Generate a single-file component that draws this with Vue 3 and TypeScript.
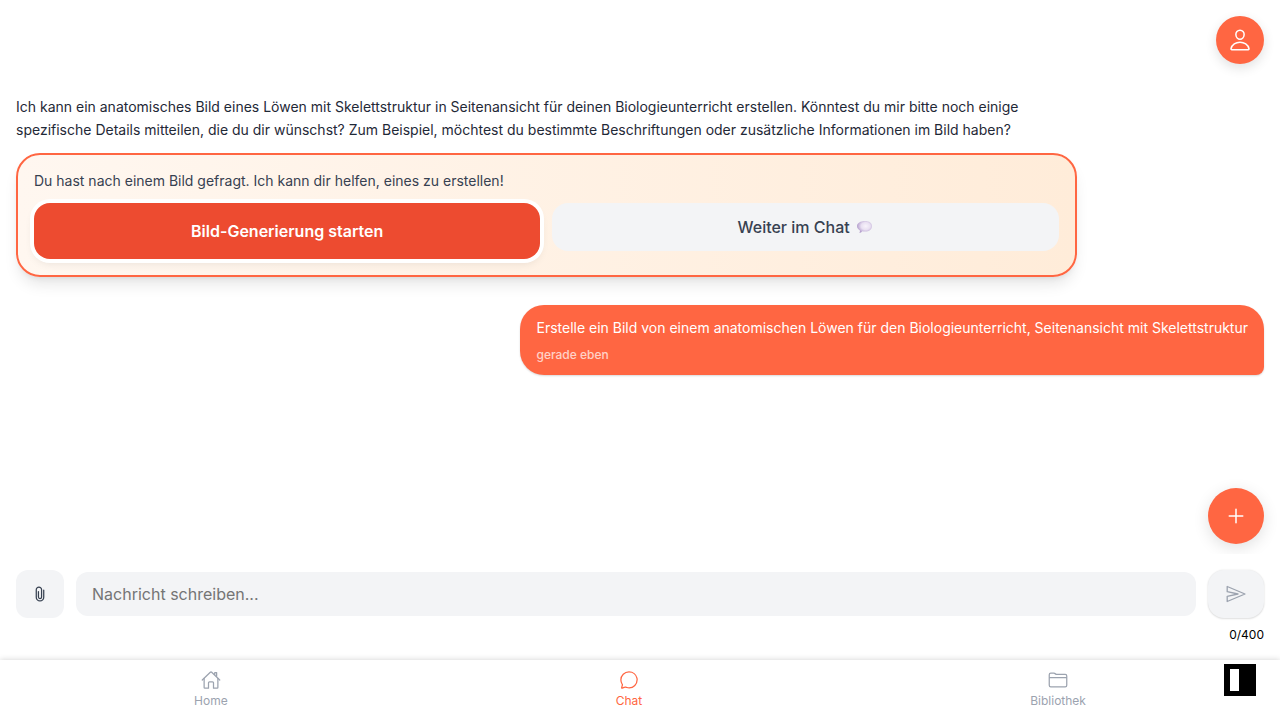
<script setup lang="ts">
import { ref } from 'vue'

const message = ref('')
const limit = 400

const tabs = [
  {
    label: 'Home',
    active: false,
    paths: [
      'M80 212v236a16 16 0 0016 16h96V328a24 24 0 0124-24h80a24 24 0 0124 24v136h96a16 16 0 0016-16V212',
      'M480 256L266.89 52c-5-5.28-16.69-5.34-21.78 0L32 256M400 179V64h-48v69',
    ],
  },
  {
    label: 'Chat',
    active: true,
    paths: [
      'M87.48 380c1.2-4.38-1.43-10.47-3.94-14.86a42.63 42.63 0 00-2.54-3.8 199.81 199.81 0 01-33-110C47.64 139.09 140.72 48 255.82 48 356.2 48 440 117.54 459.57 209.85a199 199 0 014.43 41.64c0 112.41-89.49 204.93-204.59 204.93-18.31 0-43-4.6-56.47-8.37s-26.92-8.77-30.39-10.11a31.14 31.14 0 00-11.13-2.07 30.7 30.7 0 00-12.08 2.43L81.5 462.78a15.92 15.92 0 01-4.66 1.22 9.61 9.61 0 01-9.58-9.74 15.85 15.85 0 01.6-3.29z',
    ],
  },
  {
    label: 'Bibliothek',
    active: false,
    paths: [
      'M440 432H72a40 40 0 01-40-40V120a40 40 0 0140-40h75.89a40 40 0 0122.19 6.72l27.84 18.56a40 40 0 0022.19 6.72H440a40 40 0 0140 40v240a40 40 0 01-40 40zM32 192h448',
    ],
  },
]
</script>

<template>
  <div class="app">
    <header class="top">
      <button class="profile" type="button" aria-label="Profil">
        <svg class="icon large" viewBox="0 0 512 512">
          <path d="M344 144c-3.92 52.87-44 96-88 96s-84.15-43.12-88-96c-4-55 35-96 88-96s92 42 88 96z" />
          <path d="M256 304c-87 0-175.3 48-191.64 138.6C62.39 453.52 68.57 464 80 464h352c11.44 0 17.62-10.48 15.65-21.4C431.3 352 343 304 256 304z" />
        </svg>
      </button>
    </header>

    <main class="messages">
      <section class="assistant">
        <p class="answer">
          Ich kann ein anatomisches Bild eines Löwen mit Skelettstruktur in Seitenansicht für deinen Biologieunterricht erstellen. Könntest du mir bitte noch einige spezifische Details mitteilen, die du dir wünschst? Zum Beispiel, möchtest du bestimmte Beschriftungen oder zusätzliche Informationen im Bild haben?
        </p>
        <div class="suggestion">
          <p class="hint">Du hast nach einem Bild gefragt. Ich kann dir helfen, eines zu erstellen!</p>
          <div class="choices">
            <button class="start" type="button">Bild-Generierung starten</button>
            <button class="continue" type="button">
              <span>Weiter im Chat</span>
              <svg class="balloon" viewBox="0 0 18 16" aria-hidden="true">
                <defs>
                  <radialGradient id="balloon-fill" cx="58%" cy="42%" r="60%">
                    <stop offset="0" stop-color="#f8f3fb" />
                    <stop offset="0.5" stop-color="#e9e0f2" />
                    <stop offset="1" stop-color="#b09aca" />
                  </radialGradient>
                </defs>
                <path d="M9 2C13.500 2 16 4.200 16 7.200S13.500 12.600 9 12.600C8 12.600 7 12.500 6.200 12.300C5.500 13.300 4.500 14 3.200 14.100C3.900 13.200 4 12.200 3.900 11.400C2.200 10.400 1 8.800 1 7.200C1 4.200 4.500 2 9 2Z" fill="url(#balloon-fill)" />
              </svg>
            </button>
          </div>
        </div>
      </section>

      <section class="own">
        <p class="request">Erstelle ein Bild von einem anatomischen Löwen für den Biologieunterricht, Seitenansicht mit Skelettstruktur</p>
        <time class="time">gerade eben</time>
      </section>

      <button class="add" type="button" aria-label="Neuer Chat">
        <svg class="icon medium" viewBox="0 0 512 512"><path d="M256 112v288M400 256H112" /></svg>
      </button>
    </main>

    <form class="composer" @submit.prevent>
      <div class="row">
        <button class="attach" type="button" aria-label="Datei anhängen">
          <svg class="icon small" viewBox="0 0 512 512"><path d="M216.080 192v143.850a40.080 40.080 0 0080.150 0l.13-188.550a67.940 67.940 0 10-135.870 0v189.820a95.510 95.510 0 10191 0V159.740" /></svg>
        </button>
        <input v-model="message" class="text" type="text" :maxlength="limit" placeholder="Nachricht schreiben..." aria-label="Nachricht" />
        <button class="send" type="submit" aria-label="Senden">
          <svg class="icon small" viewBox="0 0 20 20"><path class="plane" d="M1.200 2.500V7.700L12 10L1.200 12.300V17.500L19 10Z" /></svg>
        </button>
      </div>
      <output class="count">{{ message.length }}/{{ limit }}</output>
    </form>

    <nav class="tabs">
      <a v-for="tab in tabs" :key="tab.label" href="#" class="tab" :class="{ active: tab.active }">
        <svg class="icon small" viewBox="0 0 512 512"><path v-for="d in tab.paths" :key="d" :d="d" /></svg>
        <span>{{ tab.label }}</span>
      </a>
      <span class="badge"><span class="badge-bar"></span></span>
    </nav>
  </div>
</template>

<style>
body {
  background: #fff;
}
</style>

<style scoped>
.app {
  display: flex;
  flex-direction: column;
  height: 100vh;
  font-family: Inter, "Liberation Sans", sans-serif;
  color: #1f2937;
}

button,
input {
  font: inherit;
  border: 0;
  margin: 0;
  padding: 0;
}

button {
  cursor: pointer;
}

p {
  margin: 0;
}

.icon {
  display: block;
  fill: none;
  stroke: currentColor;
  stroke-width: 32;
  stroke-linecap: round;
  stroke-linejoin: round;
}

.plane {
  stroke-width: 1.3;
}

.small {
  width: 20px;
  height: 20px;
}

.medium,
.large {
  width: 24px;
  height: 24px;
}

.top {
  display: flex;
  justify-content: flex-end;
  padding: 16px;
}

.profile,
.add {
  display: flex;
  align-items: center;
  justify-content: center;
  border-radius: 50%;
  background: #ff6642;
  color: #fff;
}

.profile {
  width: 48px;
  height: 48px;
  box-shadow: 0 4px 12px rgba(0, 0, 0, 0.12);
}

.messages {
  position: relative;
  display: flex;
  flex: 1;
  flex-direction: column;
  gap: 28px;
  min-height: 0;
  padding: 15px 16px;
  overflow: hidden;
}

.assistant {
  width: 85%;
}

.answer {
  font-size: 14px;
  line-height: 23px;
  color: #1f2937;
}

.suggestion {
  margin-top: 12px;
  padding: 16px;
  border: 2px solid #ff6642;
  border-radius: 24px;
  background: linear-gradient(90deg, #fff7f0, #ffecd9);
  box-shadow: 0 10px 15px -3px rgba(0, 0, 0, 0.1), 0 4px 6px -4px rgba(0, 0, 0, 0.1);
}

.hint {
  font-size: 14px;
  line-height: 20px;
  color: #374151;
}

.choices {
  display: flex;
  align-items: flex-start;
  gap: 12px;
  margin-top: 12px;
}

.start,
.continue {
  flex: 1;
  border-radius: 16px;
  font-size: 16px;
}

.start {
  height: 56px;
  background: #ed4b30;
  color: #fff;
  font-weight: 600;
  box-shadow: 0 0 0 4px #fff, 0 4px 10px rgba(0, 0, 0, 0.1);
}

.continue {
  display: flex;
  align-items: center;
  justify-content: center;
  gap: 6px;
  height: 48px;
  background: #f3f4f6;
  color: #374151;
  font-weight: 500;
}

.balloon {
  width: 18px;
  height: 16px;
}

.own {
  align-self: flex-end;
  padding: 12px 16px;
  border-radius: 24px 24px 8px 24px;
  background: #ff6642;
  color: #fff;
  box-shadow: 0 1px 2px rgba(0, 0, 0, 0.15);
}

.request {
  font-size: 14px;
  line-height: 22px;
}

.time {
  display: block;
  margin-top: 8px;
  font-size: 12px;
  font-weight: 500;
  line-height: 16px;
  opacity: 0.7;
}

.add {
  position: absolute;
  right: 16px;
  bottom: 10px;
  width: 56px;
  height: 56px;
  box-shadow: 0 4px 16px rgba(0, 0, 0, 0.12);
}

.composer {
  padding: 16px;
}

.row {
  display: flex;
  align-items: center;
  gap: 12px;
}

.attach,
.send {
  display: flex;
  flex: none;
  align-items: center;
  justify-content: center;
  width: 48px;
  height: 48px;
  border-radius: 12px;
  background: #f3f4f6;
  color: #374151;
}

.send {
  width: 56px;
  border-radius: 16px;
  color: #9ca3af;
  box-shadow: 0 0 2px rgba(0, 0, 0, 0.1), 0 1px 2px rgba(0, 0, 0, 0.1);
}

.text {
  flex: 1;
  min-width: 0;
  height: 44px;
  padding: 0 16px;
  border-radius: 12px;
  background: #f3f4f6;
  color: #1f2937;
  font-size: 16px;
}

.text::placeholder {
  color: #757575;
}

.count {
  display: block;
  margin-top: 8px;
  font-size: 12px;
  line-height: 18px;
  text-align: right;
  color: #000;
}

.tabs {
  position: relative;
  display: flex;
  justify-content: space-around;
  height: 60px;
  background: #fff;
  box-shadow: 0 0 6px rgba(0, 0, 0, 0.18);
}

.tab {
  display: flex;
  flex-direction: column;
  align-items: center;
  gap: 4px;
  padding: 10px 12px 0;
  color: #9ca3af;
  font-size: 12px;
  font-weight: 400;
  line-height: 14px;
  text-decoration: none;
}

.tab.active {
  color: #ff6642;
}

.badge {
  position: absolute;
  top: 4px;
  right: 24px;
  width: 32px;
  height: 32px;
  padding: 5px 6px;
  box-sizing: border-box;
  background: #000;
}

.badge-bar {
  display: block;
  width: 9px;
  height: 22px;
  background: #fff;
}
</style>
